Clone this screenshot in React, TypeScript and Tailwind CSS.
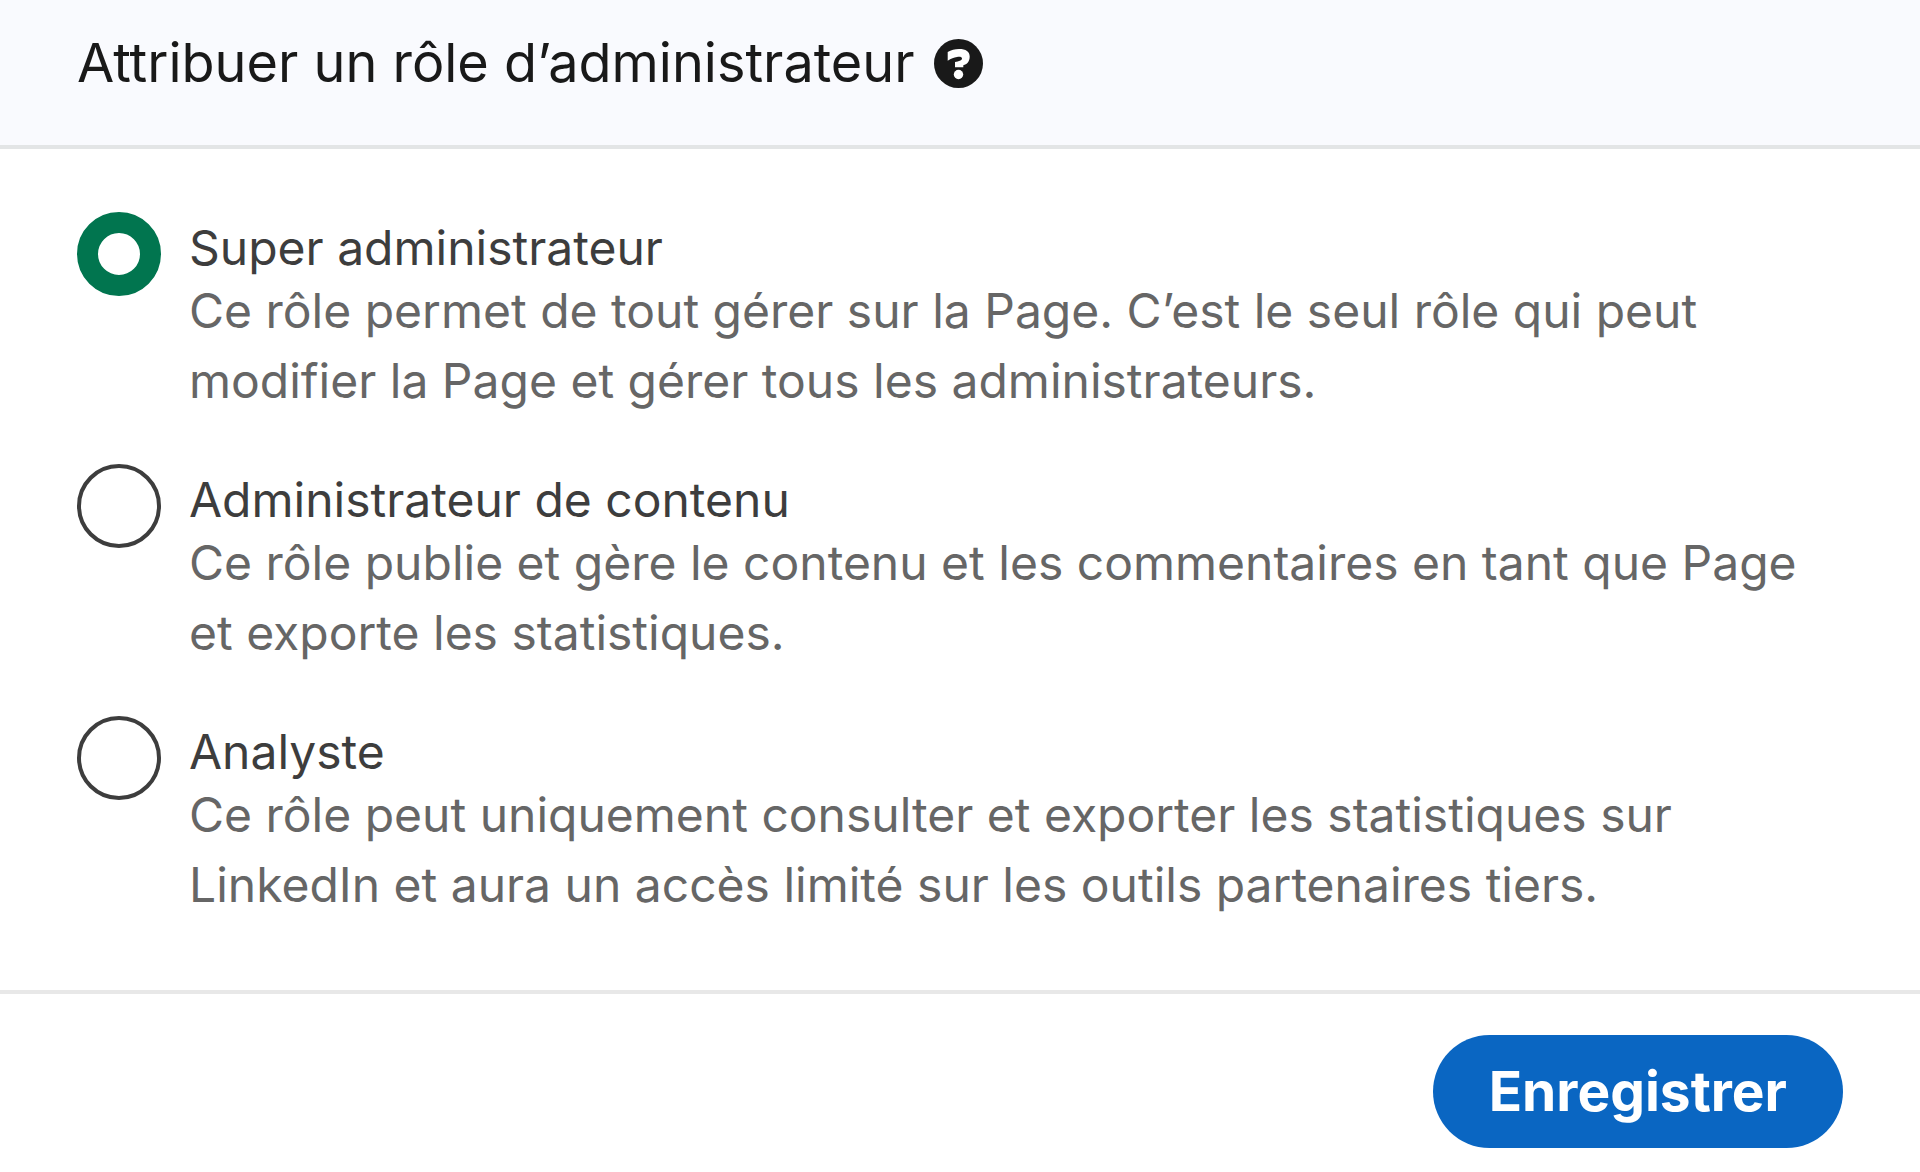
import { useState } from "react";

const ROLES = [
  {
    id: "super",
    label: "Super administrateur",
    description:
      "Ce rôle permet de tout gérer sur la Page. C’est le seul rôle qui peut modifier la Page et gérer tous les administrateurs.",
  },
  {
    id: "content",
    label: "Administrateur de contenu",
    description:
      "Ce rôle publie et gère le contenu et les commentaires en tant que Page et exporte les statistiques.",
  },
  {
    id: "analyst",
    label: "Analyste",
    description:
      "Ce rôle peut uniquement consulter et exporter les statistiques sur LinkedIn et aura un accès limité sur les outils partenaires tiers.",
  },
];

export default function App() {
  const [role, setRole] = useState("super");

  return (
    <form className="flex min-h-screen flex-col bg-white font-[Inter,sans-serif]" onSubmit={(e) => e.preventDefault()}>
      <header className="flex items-center gap-[19px] border-b-4 border-[#e3e5e6] bg-[#f9fafe] px-[77px] pt-7 pb-[47px]">
        <h1 className="text-[54px] leading-[70px] text-[#191919]">Attribuer un rôle d’administrateur</h1>
        <button type="button" aria-label="Aide" className="text-[#191919]">
          <HelpIcon />
        </button>
      </header>

      <fieldset className="flex flex-col gap-12 px-[77px] pt-[63px] pb-[70px]">
        {ROLES.map((r) => (
          <RoleOption key={r.id} {...r} checked={role === r.id} onSelect={() => setRole(r.id)} />
        ))}
      </fieldset>

      <footer className="flex flex-1 items-start justify-end border-t-4 border-[#e8e8e8] px-[77px] pt-[41px]">
        <button type="submit" className="h-[113px] rounded-full bg-[#0a66c2] px-14 text-[55px] font-bold text-white">
          Enregistrer
        </button>
      </footer>
    </form>
  );
}

type RoleOptionProps = {
  id: string;
  label: string;
  description: string;
  checked: boolean;
  onSelect: () => void;
};

function RoleOption({ id, label, description, checked, onSelect }: RoleOptionProps) {
  return (
    <div className="flex items-start gap-7">
      <input
        id={id}
        type="radio"
        name="role"
        checked={checked}
        onChange={onSelect}
        aria-describedby={`${id}-description`}
        className="size-21 shrink-0 appearance-none rounded-full border-4 border-[#3d3d3d] bg-white checked:border-[21px] checked:border-[#01754f]"
      />
      <div className="pt-2">
        <label htmlFor={id} className="block text-[48px] leading-[55px] text-[#3d3d3d]">
          {label}
        </label>
        <p id={`${id}-description`} className="pt-px text-[48px] leading-[70px] text-[#666666]">
          {description}
        </p>
      </div>
    </div>
  );
}

function HelpIcon() {
  return (
    <svg viewBox="0 0 49 49" className="size-[49px]" aria-hidden="true">
      <circle cx="24.5" cy="24.5" r="24.5" fill="currentColor" />
      <path
        d="M13.700 13C17 11 21 10 25 10C32 10 35.700 12.500 35.700 17.500C35.700 22.500 33 25.300 29.300 26.300V28.300H21V23C25 22.300 28 21.500 28 19.500C28 18 26 17.500 23 18C20 18.500 17 19.500 13.700 21.700Z"
        fill="white"
      />
      <circle cx="24.500" cy="35.500" r="4.700" fill="white" />
    </svg>
  );
}
